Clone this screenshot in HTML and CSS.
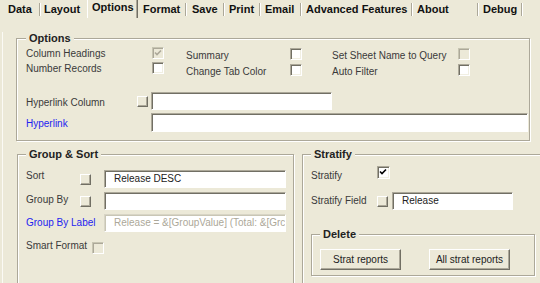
FILE: index.html
```html
<!DOCTYPE html>
<html>
<head>
<meta charset="utf-8">
<link rel="stylesheet" href="styles.css">
</head>
<body>
<div class="tabs">
  <div class="tab t-data">Data</div>
  <div class="tab t-layout nosep">Layout</div>
  <div class="tab t-options sel">Options</div>
  <div class="tab t-format">Format</div>
  <div class="tab t-save">Save</div>
  <div class="tab t-print">Print</div>
  <div class="tab t-email">Email</div>
  <div class="tab t-adv">Advanced Features</div>
  <div class="tab t-about">About</div>
  <div class="tab t-debug">Debug</div>
</div>
<div class="panel">
  <fieldset class="box options">
    <legend>Options</legend>
    <div class="checks">
      <div class="cgroup cg-left">
        <span class="lbl">Column Headings</span><span class="cb disabled"><svg viewBox="0 0 10 10"><path d="M2 4.5 L4 6.5 L8 2.5" /></svg></span>
        <span class="lbl">Number Records</span><span class="cb"></span>
      </div>
      <div class="cgroup cg-mid">
        <span class="lbl">Summary</span><span class="cb"></span>
        <span class="lbl">Change Tab Color</span><span class="cb"></span>
      </div>
      <div class="cgroup cg-right">
        <span class="lbl">Set Sheet Name to Query</span><span class="cb disabled"></span>
        <span class="lbl">Auto Filter</span><span class="cb"></span>
      </div>
    </div>
    <div class="row hl-col">
      <span class="lbl w-hlcol">Hyperlink Column</span>
      <span class="sq"></span>
      <span class="tb tb-hlcol"></span>
    </div>
    <div class="row hl">
      <span class="lbl link w-hl">Hyperlink</span>
      <span class="tb tb-hl"></span>
    </div>
  </fieldset>
  <div class="lower">
    <fieldset class="box groupsort">
      <legend>Group &amp; Sort</legend>
      <div class="gs-grid">
        <span class="lbl gl r1">Sort</span>
        <span class="sq"></span>
        <span class="tb tb-gs"><span class="val">Release DESC</span></span>

        <span class="lbl gl r2">Group By</span>
        <span class="sq"></span>
        <span class="tb tb-gs"></span>

        <span class="lbl gl link r3">Group By Label</span>
        <span></span>
        <span class="tb tb-gs tb-dis"><span class="val">Release = &amp;[GroupValue] (Total: &amp;[Grc</span></span>

        <span class="lbl gl r4">Smart Format</span>
        <span></span>
        <span class="cb disabled cb-smart"></span>
      </div>
    </fieldset>
    <fieldset class="box stratify">
      <legend>Stratify</legend>
      <div class="st-grid">
        <span class="lbl st-l1">Stratify</span>
        <span class="cb cb-strat"><svg viewBox="0 0 10 10"><path d="M2 4.5 L4 6.5 L8 2.5" /></svg></span>
        <span></span>

        <span class="lbl st-l2">Stratify Field</span>
        <span class="sq"></span>
        <span class="tb tb-st"><span class="val">Release</span></span>
      </div>
      <fieldset class="box delete">
        <legend>Delete</legend>
        <div class="btns">
          <button class="btn">Strat reports</button>
          <button class="btn">All strat reports</button>
        </div>
      </fieldset>
    </fieldset>
  </div>
</div>
</body>
</html>
```
FILE: styles.css
```css
* { box-sizing: border-box; }
html, body {
  margin: 0;
  padding: 0;
}
body {
  width: 540px;
  height: 283px;
  overflow: hidden;
  background: #ece9d8;
  font-family: "Liberation Sans", Arial, sans-serif;
  font-size: 10px;
  color: #3a3a3a;
}

/* ---------- tabs ---------- */
.tabs {
  display: flex;
  height: 18px;
}
.tab {
  flex-shrink: 0;
  height: 13px;
  margin-top: 3px;
  padding-left: 5px;
  font-weight: bold;
  font-size: 11px;
  line-height: 13px;
  color: #111;
  white-space: nowrap;
  border-right: 1px solid #aca899;
  box-shadow: 1px 0 0 #fff;
}
.tab.nosep { border-right: none; box-shadow: none; }
.tab.sel {
  height: 18px;
  margin-top: 0;
  padding-top: 1px;
  padding-left: 4px;
  border-left: 1px solid #fff;
  border-right: 1px solid #aca899;
  box-shadow: 1px 0 0 #716f64;
}
.t-data { width: 40px; padding-left: 8px; }
.t-layout { width: 47px; padding-left: 4px; }
.t-options { width: 50px; }
.t-format { width: 49px; padding-left: 6px; }
.t-save { width: 38px; padding-left: 6px; }
.t-print { width: 36px; }
.t-email { width: 41px; }
.t-adv { width: 111px; }
.t-about { width: 66px; }
.t-debug { width: 44px; }

/* ---------- panel ---------- */
.panel {
  height: 265px;
  border-left: 1px solid #fbfaf5;
  margin-left: 2px;
}

.box {
  margin: 0;
  min-inline-size: 0;
  flex-shrink: 0;
  border: 1px solid #aca899;
  box-shadow: inset 1px 1px 0 #fff, 1px 1px 0 #fff;
}
.box legend {
  padding: 0 3px;
  margin-left: 0;
  font-weight: bold;
  font-size: 11px;
  line-height: 13px;
  color: #222;
  background: #ece9d8;
}

.lbl { line-height: 12px; white-space: nowrap; }
.link { color: #2323f0; }

/* checkbox */
.cb {
  display: block;
  width: 12px;
  height: 12px;
  background: #fff;
  border: 1px solid;
  border-color: #aca899 #fff #fff #aca899;
  box-shadow: inset 1px 1px 0 #716f64, inset -1px -1px 0 #f1efe2;
}
.cb svg {
  display: block;
  width: 10px;
  height: 10px;
  fill: none;
  stroke: #000;
  stroke-width: 1.6;
}
.cb.disabled {
  background: #ece9d8;
  border-color: #c7c5b2 #fff #fff #c7c5b2;
  box-shadow: inset 1px 1px 0 #aca899;
}
.cb.disabled svg { stroke: #aca899; }

/* small square button */
.sq {
  display: block;
  width: 11px;
  height: 11px;
  background: #ece9d8;
  border: 1px solid;
  border-color: #fff #716f64 #716f64 #fff;
  box-shadow: inset -1px -1px 0 #aca899;
}

/* textbox */
.tb {
  display: block;
  height: 18px;
  background: #fff;
  border: 1px solid;
  border-color: #aca899 #fff #fff #aca899;
  box-shadow: inset 1px 1px 0 #716f64;
  overflow: hidden;
  white-space: nowrap;
}
.tb .val {
  display: block;
  padding-left: 9px;
  line-height: 16px;
  color: #222;
}
.tb-dis {
  border-color: #d8d5c6 #fff #fff #d8d5c6;
  box-shadow: inset 1px 1px 0 #c9c6b5;
}
.tb-dis .val { color: #aca899; }

/* ---------- options ---------- */
.options {
  width: 514px;
  margin: 14px 0 0 13px;
  padding: 0 0 8px 9px;
}
.checks {
  display: flex;
  align-items: flex-start;
}
.cgroup {
  display: grid;
  align-items: center;
}
.cg-left {
  grid-template-columns: 126px 12px;
  grid-auto-rows: 15px;
}
.cg-mid {
  grid-template-columns: 104px 12px;
  grid-auto-rows: 16px;
  margin: 1px 0 0 22px;
}
.cg-right {
  grid-template-columns: 126px 12px;
  grid-auto-rows: 16px;
  margin: 1px 0 0 30px;
}
.cgroup .lbl { padding-top: 3px; }

.row {
  display: flex;
  align-items: center;
}
.hl-col { margin-top: 14px; }
.hl { margin-top: 3px; }
.w-hlcol { width: 111px; padding-top: 3px; }
.w-hl { width: 125px; padding-top: 2px; }
.tb-hlcol { width: 181px; margin-left: 3px; }
.tb-hl { width: 377px; height: 19px; }

/* ---------- lower ---------- */
.lower {
  display: flex;
  align-items: flex-start;
  margin-top: 7px;
}
.groupsort {
  width: 277px;
  height: 160px;
  margin-left: 14px;
  padding: 0 0 0 8px;
}
.gs-grid {
  display: grid;
  grid-template-columns: 54px 11px 182px;
  grid-template-rows: 18px 18px 18px 12px;
  row-gap: 4px;
  margin-top: 9px;
}
.gs-grid .sq { align-self: center; }
.gs-grid .tb-gs { margin-left: 13px; width: 182px; }
.gs-grid .r2 { padding-top: 2px; }
.gs-grid .r3 { padding-top: 3px; }
.gs-grid .r4 { margin-top: 4px; }
.cb-smart { margin: 6px 0 0 1px; }

.stratify {
  width: 250px;
  height: 160px;
  margin-left: 8px;
  padding: 0 0 0 8px;
}
.st-grid {
  display: grid;
  grid-template-columns: 66px 12px 124px;
  grid-template-rows: 13px 18px;
  row-gap: 13px;
  margin-top: 5px;
}
.st-l1 { padding-top: 4px; }
.st-l2 { padding-top: 3px; }
.cb-strat { width: 13px; height: 13px; }
.st-grid .sq { align-self: center; }
.tb-st { width: 121px; margin-left: 3px; }

.delete {
  width: 224px;
  margin-top: 18px;
  padding: 0 0 5px 8px;
}
.btns {
  display: flex;
  gap: 28px;
  margin-top: 8px;
}
.btn {
  flex-shrink: 0;
  width: 81px;
  height: 21px;
  padding: 0;
  background: #ece9d8;
  border: 1px solid;
  border-color: #fff #716f64 #716f64 #fff;
  box-shadow: inset -1px -1px 0 #aca899;
  font-family: "Liberation Sans", Arial, sans-serif;
  font-size: 10px;
  color: #222;
}
```
